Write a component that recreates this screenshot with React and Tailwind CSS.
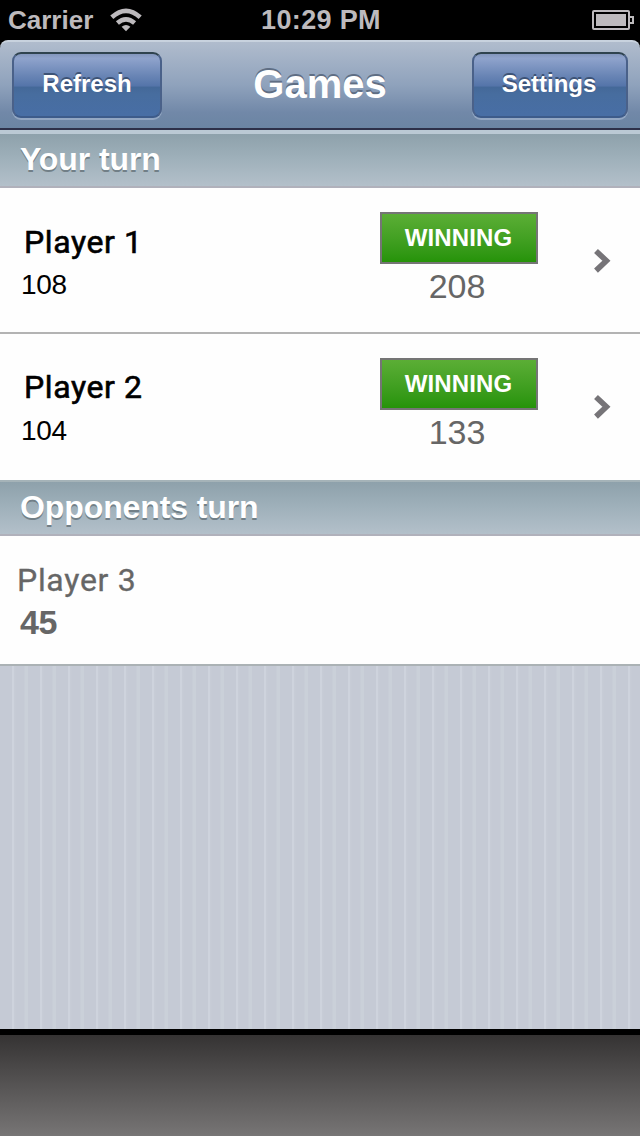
const stripes =
  "bg-[repeating-linear-gradient(90deg,#c5cad5_0px,#c5cad5_12px,#ced3dd_12px,#ced3dd_14px,#c8cdd7_14px,#c5cad5_16px,#c5cad5_24px,#cad0d9_25px,#cad0d9_28px)]";

function StatusBar() {
  return (
    <header className="flex h-10 shrink-0 items-center justify-between bg-black pr-1.5 pl-2 text-[#bdbabd]">
      <div className="flex w-[200px] items-center gap-[17px]">
        <span className="text-[26px] leading-10 font-bold">Carrier</span>
        <svg width="32" height="24" viewBox="0 0 32 24" fill="none" stroke="currentColor" strokeWidth="4.6">
          <path d="M1.8 9.2Q16 -3.6 30.2 9.2" />
          <path d="M7.4 15Q16 7.6 24.6 15" />
          <path d="M16 23.2l-4.4-4.4q4.4-3.8 8.8 0z" fill="currentColor" stroke="none" />
        </svg>
      </div>
      <span className="text-[27px] leading-10 font-bold tracking-[0.35px]">10:29 PM</span>
      <div className="flex w-[200px] justify-end">
        <svg width="42" height="20" viewBox="0 0 42 20" fill="none" stroke="currentColor" strokeWidth="2">
          <rect x="1" y="1" width="36" height="18" rx="1" />
          <rect x="4" y="4" width="30" height="12" fill="currentColor" stroke="none" />
          <path d="M38 7h3v6h-3" />
        </svg>
      </div>
    </header>
  );
}

function NavButton({ label, width }) {
  return (
    <button
      className={
        width +
        " h-[66px] rounded-[9px] border-2 border-t-[#2f434f] border-x-[#4a6189] border-b-[#3d5b8a] bg-[linear-gradient(180deg,#8396bd_0%,#8fa3cc_7%,#6985b5_35%,#5474a9_52%,#446898_53%,#476d9f_65%,#486ea5_100%)] pb-[2px] text-2xl leading-none font-bold text-white shadow-[0_2px_0_#93a7c3] [text-shadow:0_-2px_0.5px_#3d5376]"
      }
    >
      {label}
    </button>
  );
}

function NavBar() {
  return (
    <div className="shrink-0 bg-black">
      <nav className="flex h-[90px] items-start justify-between rounded-t-[8px] border-t-2 border-b-2 border-t-[#c8d2de] border-b-[#2d3049] bg-[linear-gradient(180deg,#b0bccd_0%,#8fa2bc_50%,#7188a8_82%,#6b85a3_100%)] px-3 pt-[10px]">
        <div className="w-[156px]"><NavButton label="Refresh" width="w-[150px]" /></div>
        <h1 className="pt-1 text-[40px] leading-[56px] font-bold text-white [text-shadow:0_-2px_0.5px_#5f6e84]">Games</h1>
        <NavButton label="Settings" width="w-[156px] pr-[2px]" />
      </nav>
    </div>
  );
}

function SectionHeader({ title }) {
  return (
    <h2 className="h-[54px] shrink-0 border-b-2 border-[#b0b1bb] bg-[linear-gradient(180deg,#8ea1ab_0%,#9caeb8_40%,#b3c0ca_100%)] pl-5 text-[32px] leading-[50px] font-bold tracking-[-0.1px] text-white [text-shadow:0_2px_0.5px_#717f87]">
      {title}
    </h2>
  );
}

function GameRow({ name, score, opponentScore, border, nameLine }) {
  return (
    <li className={border + " flex h-[146px] border-b-2 bg-[#fefefe]"}>
      <div className="flex w-[380px] flex-col pt-[34px]">
        <span className={nameLine + " h-10 pl-6 font-[Roboto] text-[32px] tracking-[0.6px] text-black [-webkit-text-stroke:0.6px_#000]"}>{name}</span>
        <span className="pl-[21px] text-[28px] leading-[45px] tracking-[-0.3px] text-black">{score}</span>
      </div>
      <div className="flex w-[158px] flex-col items-center pt-6">
        <span className="flex h-[52px] w-full items-center justify-center border-2 border-[#757575] bg-linear-to-b from-[#5bae35] to-[#259308] pr-px text-2xl leading-none font-bold tracking-[0.1px] text-white">WINNING</span>
        <span className="-ml-1 text-[34px] leading-[45px] text-[#666]">{opponentScore}</span>
      </div>
      <svg className="mt-[60px] ml-[55px]" width="20" height="26" viewBox="0 0 20 26" fill="none" stroke="#767478" strokeWidth="5.6">
        <path d="M3 3L13.4 12.8L3 22.6" />
      </svg>
    </li>
  );
}

export default function App() {
  return (
    <div className="flex h-[1136px] w-[640px] flex-col overflow-hidden font-['Liberation_Sans',Arial,sans-serif]">
      <StatusBar />
      <NavBar />
      <main className={"flex flex-1 flex-col " + stripes}>
        <div className="h-1 shrink-0 bg-[#bbc9d4]" />
        <SectionHeader title="Your turn" />
        <ul>
          <GameRow name="Player 1" score="108" opponentScore="208" border="border-[#b3b3b3]" nameLine="leading-10" />
          <GameRow name="Player 2" score="104" opponentScore="133" border="border-[#fefefe]" nameLine="leading-[38px]" />
        </ul>
        <div className="h-0.5 shrink-0 bg-[#a5b3b8]" />
        <SectionHeader title="Opponents turn" />
        <div className="flex h-[130px] flex-col border-b-2 border-[#abb2b5] bg-[#fefefe] pt-6 text-[#666]">
          <span className="pl-[17px] font-[Roboto] text-[32px] leading-10 tracking-[0.7px] [-webkit-text-stroke:0.3px_#666]">Player 3</span>
          <span className="pt-px pl-5 text-[34px] leading-[43px] font-bold tracking-[-0.5px]">45</span>
        </div>
      </main>
      <footer className="h-[107px] shrink-0 border-t-[6px] border-black bg-[linear-gradient(180deg,#353333_0%,#777575_100%)]" />
    </div>
  );
}
